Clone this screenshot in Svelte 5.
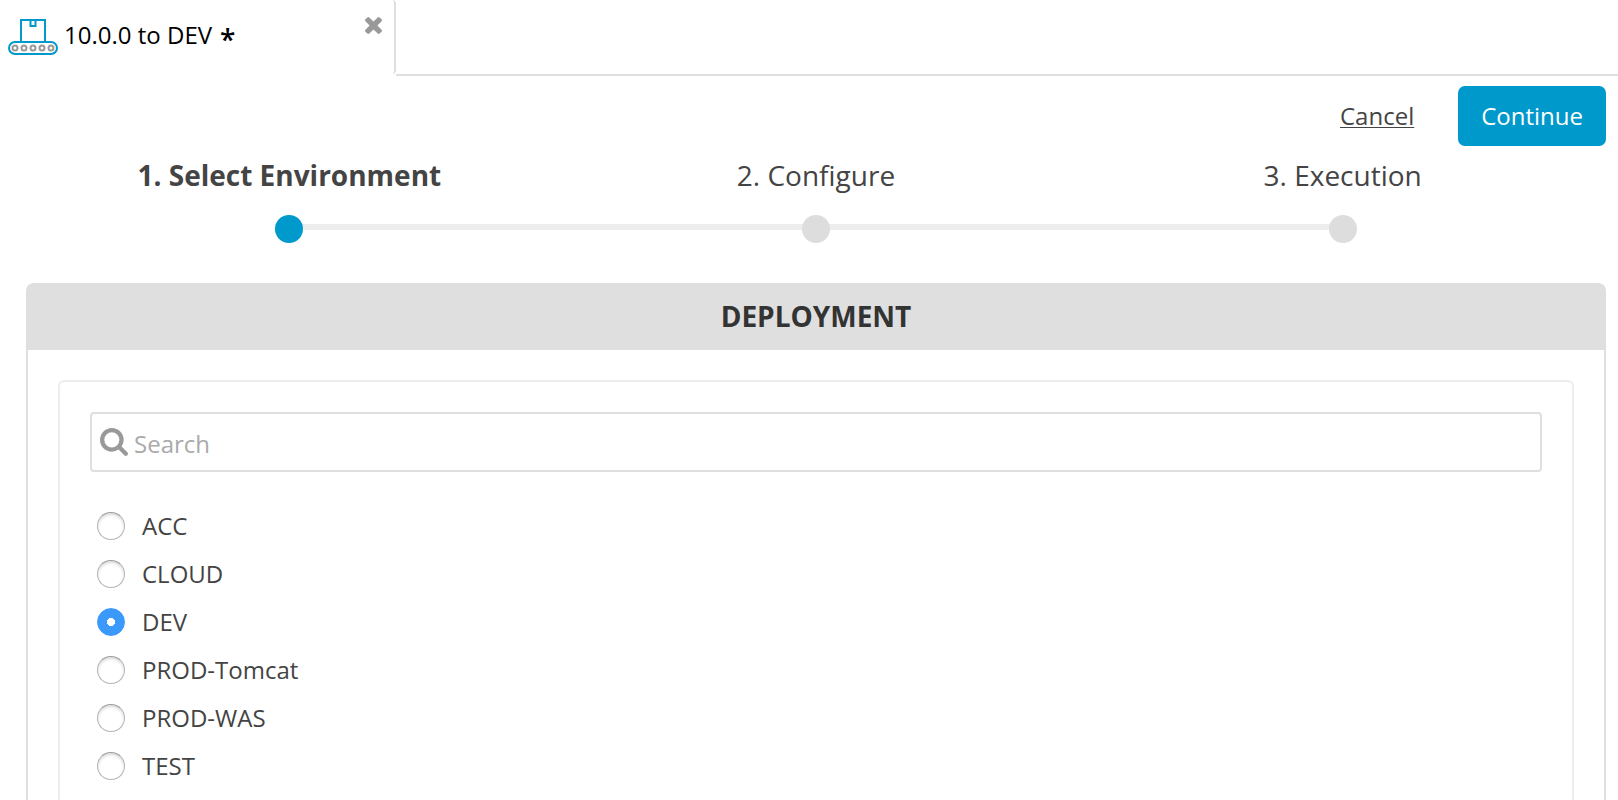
<script>
  const steps = ['1. Select Environment', '2. Configure', '3. Execution'];
  const environments = ['ACC', 'CLOUD', 'DEV', 'PROD-Tomcat', 'PROD-WAS', 'TEST'];
  let current = $state(0);
  let selected = $state('DEV');
  let query = $state('');
  const visible = $derived(
    environments.filter((name) => name.toLowerCase().includes(query.toLowerCase()))
  );
</script>

<div class="page">
  <header class="tabs">
    <div class="tab">
      <svg class="package" viewBox="0 0 50 38" width="50" height="38" fill="none" aria-hidden="true">
        <g stroke="#0099cc" stroke-width="2">
          <path d="M13 24V2h24v22" />
          <path d="M22.500 2v6h5V2" />
          <rect x="1" y="24" width="48" height="12" rx="6" />
        </g>
        <g stroke="#999" stroke-width="2">
          <circle cx="7" cy="30" r="2.500" />
          <circle cx="16" cy="30" r="2.500" />
          <circle cx="25" cy="30" r="2.500" />
          <circle cx="34" cy="30" r="2.500" />
          <circle cx="43" cy="30" r="2.500" />
        </g>
      </svg>
      <span class="title">10.0.0 to DEV <span class="changed">*</span></span>
      <button class="close" type="button" aria-label="Close tab">
        <svg viewBox="110 366 1188 1188" width="17" height="17" fill="#999" aria-hidden="true">
          <path d="M1298 1322q0 40-28 68l-136 136q-28 28-68 28t-68-28l-294-294-294 294q-28 28-68 28t-68-28l-136-136q-28-28-28-68t28-68l294-294-294-294q-28-28-28-68t28-68l136-136q28-28 68-28t68 28l294 294 294-294q28-28 68-28t68 28l136 136q28 28 28 68t-28 68l-294 294 294 294q28 28 28 68z" />
        </svg>
      </button>
    </div>
    <div class="strip"></div>
  </header>

  <main>
    <div class="actions">
      <a href="#cancel">Cancel</a>
      <button class="continue" type="button" onclick={() => (current = Math.min(current + 1, 2))}>Continue</button>
    </div>

    <ol class="steps">
      {#each steps as step, i}
        <li class:active={i === current}>
          <span>{step}</span>
          <div class="track"><i class="dot"></i></div>
        </li>
      {/each}
    </ol>

    <section class="panel">
      <h2>DEPLOYMENT</h2>
      <div class="body">
        <div class="group">
          <label class="search">
            <svg viewBox="0 128 1664 1664" width="28" height="28" fill="#999" aria-hidden="true">
              <path d="M1152 832q0-185-131.500-316.500t-316.500-131.500-316.500 131.500-131.500 316.500 131.500 316.500 316.500 131.500 316.500-131.500 131.500-316.500zm512 832q0 52-38 90t-90 38q-54 0-90-38l-343-342q-179 124-399 124-143 0-273.500-55.500t-225-150-150-225-55.500-273.500 55.500-273.500 150-225 225-150 273.500-55.500 273.500 55.500 225 150 150 225 55.500 273.500q0 220-124 399l343 343q37 37 37 90z" />
            </svg>
            <input type="text" placeholder="Search" aria-label="Search" bind:value={query} />
          </label>
          <div class="options" role="radiogroup" aria-label="Environment">
            {#each visible as name (name)}
              <label>
                <input type="radio" name="environment" value={name} bind:group={selected} />
                {name}
              </label>
            {/each}
          </div>
        </div>
      </div>
    </section>
  </main>
</div>

<style>
  :global(body) {
    margin: 0;
    background: #fff;
  }
  .page {
    display: flex;
    flex-direction: column;
    min-height: 100vh;
    font: 24px/32px 'Open Sans', 'Noto Sans', sans-serif;
    color: #444;
  }
  .page,
  .page * {
    box-sizing: border-box;
  }
  svg {
    display: block;
    flex: none;
  }
  button {
    font: inherit;
    border: 0;
    cursor: pointer;
  }
  .tabs {
    display: flex;
    height: 76px;
  }
  .tab {
    display: flex;
    align-items: flex-start;
    width: 396px;
    height: 74px;
    padding: 17px 12px 0 8px;
    border-right: 2px solid #dfdfdf;
    border-radius: 0 4px 4px 0;
    color: #000;
  }
  .package {
    margin-top: 1px;
  }
  .title {
    display: flex;
    flex: 1;
    gap: 8px;
    margin-left: 6px;
    padding-top: 2px;
  }
  .changed {
    font-size: 28px;
    font-weight: 600;
    line-height: 40px;
  }
  .close {
    padding: 0;
    background: none;
  }
  .strip {
    flex: 1;
    border-bottom: 2px solid #dfdfdf;
  }
  main {
    flex: 1;
    display: flex;
    flex-direction: column;
    padding: 10px 12px 0 26px;
  }
  .actions {
    display: flex;
    justify-content: flex-end;
    align-items: center;
    gap: 44px;
  }
  .actions a {
    color: #444;
    text-decoration: underline;
    text-decoration-thickness: 1px;
    text-underline-offset: 2px;
  }
  .continue {
    height: 60px;
    padding: 0 23px;
    border-radius: 7px;
    background: #0099cc;
    color: #fff;
  }
  .steps {
    display: grid;
    grid-template-columns: repeat(3, 1fr);
    margin: 10px 0 40px;
    padding: 0;
    list-style: none;
    font-size: 28px;
    line-height: 38px;
    text-align: center;
    background: linear-gradient(#ededed, #ededed) 50% 68px / 66% 6px no-repeat;
  }
  .steps .active {
    font-weight: 700;
  }
  .track {
    display: flex;
    justify-content: center;
    margin-top: 21px;
  }
  .dot {
    width: 28px;
    height: 28px;
    border-radius: 50%;
    background: #ddd;
  }
  .active .dot {
    background: #0099cc;
  }
  .panel {
    flex: 1;
    display: flex;
    flex-direction: column;
    border: 2px solid #dfdfdf;
    border-bottom: 0;
    border-radius: 8px 8px 0 0;
  }
  h2 {
    margin: 0;
    padding: 12px 0 15px;
    background: #dfdfdf;
    color: #333;
    font-size: 28px;
    line-height: 38px;
    text-align: center;
  }
  .body {
    flex: 1;
    display: flex;
    padding: 30px 30px 0;
  }
  .group {
    flex: 1;
    padding: 30px 30px 16px;
    border: 2px solid #ededed;
    border-bottom: 0;
    border-radius: 6px 6px 0 0;
  }
  .search {
    display: flex;
    align-items: center;
    gap: 6px;
    height: 60px;
    padding: 0 8px;
    border: 2px solid #dfdfdf;
    border-radius: 4px;
  }
  .search input {
    flex: 1;
    min-width: 0;
    padding: 3px 0 0;
    border: 0;
    outline: 0;
    background: none;
    font: inherit;
    color: #444;
  }
  .search input::placeholder {
    color: #aaa;
    opacity: 1;
  }
  .options {
    display: flex;
    flex-direction: column;
    align-items: flex-start;
    gap: 16px;
    padding: 38px 7px 0;
  }
  .options label {
    display: flex;
    align-items: center;
    gap: 17px;
  }
  .options input {
    appearance: none;
    width: 28px;
    height: 28px;
    margin: 0;
    border: 1px solid #b4b4b4;
    border-top-color: #999;
    border-radius: 50%;
    background: #fff;
    box-shadow: inset 0 2px 3px #ddd;
  }
  .options input:checked {
    border-color: #3b99fc;
    background: radial-gradient(circle, #fff 4px, #3b99fc 4px);
    box-shadow: none;
  }
</style>
